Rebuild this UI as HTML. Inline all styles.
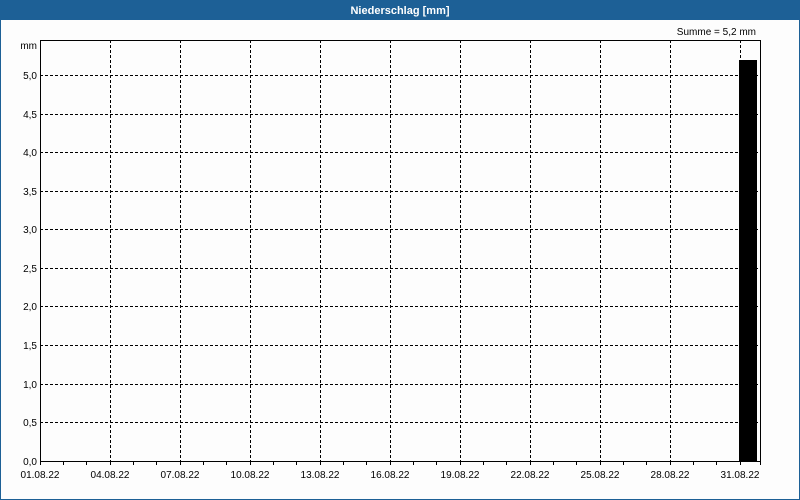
<!DOCTYPE html>
<html><head><meta charset="utf-8"><style>
html,body{margin:0;padding:0;background:#fff;}
svg{display:block;font-family:"Liberation Sans",sans-serif;}
</style></head><body>
<svg width="800" height="500" viewBox="0 0 800 500" xmlns="http://www.w3.org/2000/svg">
<rect x="0" y="0" width="800" height="500" fill="#fdfdfd"/>
<rect x="0.5" y="0.5" width="799" height="499" fill="none" stroke="#1d6096" stroke-width="1"/>
<rect x="0" y="0" width="800" height="20" fill="#1d6096"/>
<text x="400" y="14" fill="#fff" font-size="11" font-weight="bold" text-anchor="middle">Niederschlag [mm]</text>
<text x="756" y="35" fill="#000" font-size="10" text-anchor="end">Summe = 5,2 mm</text>
<text x="37" y="49" fill="#000" font-size="10" text-anchor="end">mm</text>
<g stroke="#000" stroke-width="1" stroke-dasharray="3,2" fill="none">
<path d="M40 75.5H760M40 114.5H760M40 152.5H760M40 191.5H760M40 229.5H760M40 268.5H760M40 306.5H760M40 345.5H760M40 384.5H760M40 422.5H760"/>
<path d="M110.5 40V461M180.5 40V461M250.5 40V461M320.5 40V461M390.5 40V461M460.5 40V461M530.5 40V461M600.5 40V461M670.5 40V461M740.5 40V461"/>
</g>
<rect x="739" y="60" width="18" height="401" fill="#000"/>
<path d="M40.5 40V461.5H760.5V40.5H40" fill="none" stroke="#000" stroke-width="1"/>
<g stroke="#000" stroke-width="1">
<path d="M63.5 461v4M86.5 461v4M110.5 461v4M133.5 461v4M156.5 461v4M180.5 461v4M203.5 461v4M226.5 461v4M250.5 461v4M273.5 461v4M296.5 461v4M320.5 461v4M343.5 461v4M366.5 461v4M390.5 461v4M413.5 461v4M436.5 461v4M460.5 461v4M483.5 461v4M506.5 461v4M530.5 461v4M553.5 461v4M576.5 461v4M600.5 461v4M623.5 461v4M646.5 461v4M670.5 461v4M693.5 461v4M716.5 461v4M740.5 461v4M760.5 461v4M40.5 461v4"/>
</g>
<g fill="#000" font-size="10" text-anchor="end">
<text x="37" y="79">5,0</text><text x="37" y="118">4,5</text><text x="37" y="156">4,0</text><text x="37" y="195">3,5</text><text x="37" y="233">3,0</text><text x="37" y="272">2,5</text><text x="37" y="310">2,0</text><text x="37" y="349">1,5</text><text x="37" y="388">1,0</text><text x="37" y="426">0,5</text><text x="37" y="465">0,0</text>
</g>
<g fill="#000" font-size="10" text-anchor="middle">
<text x="40" y="478">01.08.22</text><text x="110" y="478">04.08.22</text><text x="180" y="478">07.08.22</text><text x="250" y="478">10.08.22</text><text x="320" y="478">13.08.22</text><text x="390" y="478">16.08.22</text><text x="460" y="478">19.08.22</text><text x="530" y="478">22.08.22</text><text x="600" y="478">25.08.22</text><text x="670" y="478">28.08.22</text><text x="740" y="478">31.08.22</text>
</g>
</svg>
</body></html>
